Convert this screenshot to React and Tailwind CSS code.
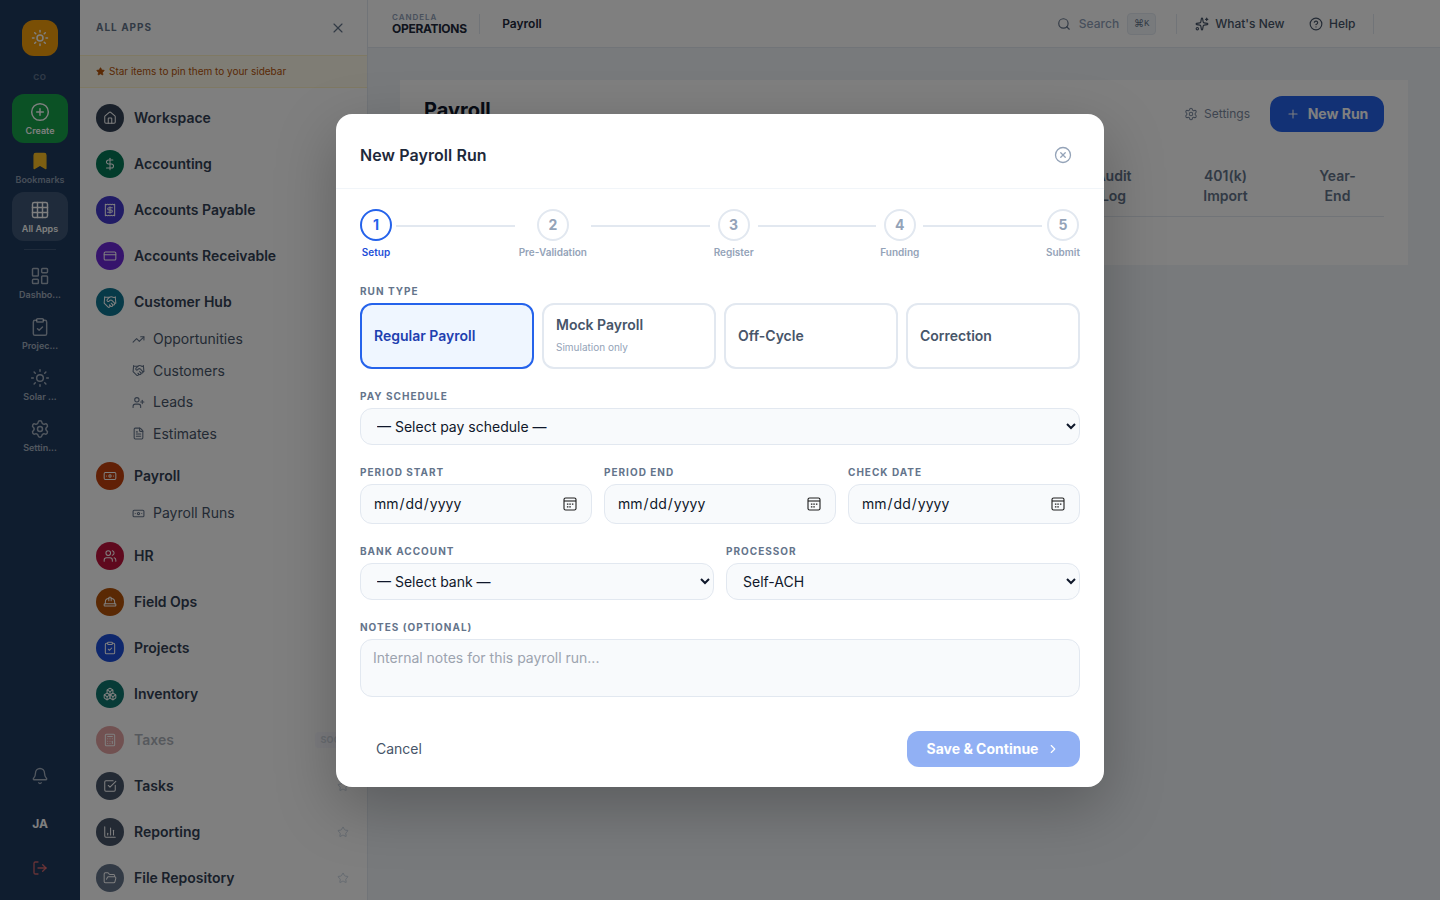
import { Fragment } from 'react';
import {
    Banknote,
    Bell,
    Bookmark,
    Boxes,
    Calculator,
    ChartColumn,
    ChevronRight,
    CircleHelp,
    CirclePlus,
    CircleX,
    ClipboardCheck,
    CreditCard,
    DollarSign,
    FileText,
    FolderOpen,
    Grid3x3,
    Handshake,
    HardHat,
    House,
    LayoutDashboard,
    LogOut,
    Plus,
    Receipt,
    Search,
    Settings,
    Sparkles,
    SquareCheckBig,
    Star,
    Sun,
    TrendingUp,
    UserPlus,
    Users,
    X,
} from 'lucide-react';

const RAIL_ITEMS = [
    { label: 'Dashbo...', icon: LayoutDashboard },
    { label: 'Projec...', icon: ClipboardCheck },
    { label: 'Solar ...', icon: Sun },
    { label: 'Settin...', icon: Settings },
];

const APPS = [
    { label: 'Workspace', icon: House, color: 'bg-[#334155]' },
    { label: 'Accounting', icon: DollarSign, color: 'bg-[#047857]' },
    { label: 'Accounts Payable', icon: Receipt, color: 'bg-[#4338ca]' },
    { label: 'Accounts Receivable', icon: CreditCard, color: 'bg-[#6d28d9]' },
    {
        label: 'Customer Hub',
        icon: Handshake,
        color: 'bg-[#0e7490]',
        childClass: 'mb-[3.5px]',
        children: [
            { label: 'Opportunities', icon: TrendingUp },
            { label: 'Customers', icon: Handshake },
            { label: 'Leads', icon: UserPlus },
            { label: 'Estimates', icon: FileText },
        ],
    },
    {
        label: 'Payroll',
        icon: Banknote,
        color: 'bg-[#c2410c]',
        childClass: 'mb-1',
        children: [{ label: 'Payroll Runs', icon: Banknote }],
    },
    { label: 'HR', icon: Users, color: 'bg-[#be123c]' },
    { label: 'Field Ops', icon: HardHat, color: 'bg-[#b45309]' },
    { label: 'Projects', icon: ClipboardCheck, color: 'bg-[#1d4ed8]' },
    { label: 'Inventory', icon: Boxes, color: 'bg-[#0f766e]' },
    { label: 'Taxes', icon: Calculator, color: 'bg-[#b91c1c]', soon: true },
    { label: 'Tasks', icon: SquareCheckBig, color: 'bg-[#475569]', star: true },
    { label: 'Reporting', icon: ChartColumn, color: 'bg-[#475569]', star: true },
    { label: 'File Repository', icon: FolderOpen, color: 'bg-[#64748b]', star: true },
];

const STEPS = ['Setup', 'Pre-Validation', 'Register', 'Funding', 'Submit'];

const RUN_TYPES = [
    { label: 'Regular Payroll', active: true },
    { label: 'Mock Payroll', hint: 'Simulation only' },
    { label: 'Off-Cycle' },
    { label: 'Correction' },
];

const fieldClass =
    'block w-full rounded-xl border border-slate-200 bg-slate-50 px-3 text-sm text-[#0f172a]';

const railButton = 'flex h-[49px] w-14 flex-col items-center justify-center gap-0.5 rounded-xl pt-0.5';

function Rail() {
    return (
        <nav className="flex w-20 shrink-0 flex-col items-center bg-[#1e3a5f] pt-5 pb-[22px]">
            <div className="flex size-9 items-center justify-center rounded-xl bg-[#f59e0b] text-white">
                <Sun size={18} strokeWidth={2} />
            </div>
            <div className="mt-[14px] h-6 text-[8px] leading-[14px] font-bold tracking-[0.08em] text-white/30">
                CO
            </div>
            <button className={`${railButton} bg-[#16a34a] text-white`}>
                <CirclePlus size={20} strokeWidth={1.75} />
                <span className="text-[9px] leading-[13px] font-semibold">Create</span>
            </button>
            <button className={`${railButton} text-white/50`}>
                <Bookmark size={20} strokeWidth={1.75} className="fill-[#fbbf24] text-[#fbbf24]" />
                <span className="text-[9px] leading-[13px] font-semibold">Bookmarks</span>
            </button>
            <button className={`${railButton} bg-white/15 text-white`}>
                <Grid3x3 size={20} strokeWidth={1.75} />
                <span className="text-[9px] leading-[13px] font-semibold">All Apps</span>
            </button>
            <div className="mt-2 mb-2 h-px w-8 bg-white/15" />
            <div className="flex flex-col gap-0.5">
                {RAIL_ITEMS.map(({ label, icon: Icon }) => (
                    <button key={label} className={`${railButton} text-white/60`}>
                        <Icon size={20} strokeWidth={1.75} />
                        <span className="text-[9px] leading-[13px] font-semibold">{label}</span>
                    </button>
                ))}
            </div>
            <div className="mt-auto flex flex-col items-center">
                <Bell size={18} strokeWidth={1.75} className="text-white/60" />
                <span className="mt-[29px] text-xs leading-5 font-bold text-white">JA</span>
                <LogOut size={16} strokeWidth={2} className="mt-[26px] mb-0.5 text-[#f87171]/80" />
            </div>
        </nav>
    );
}

function AppRow({ app }) {
    const Icon = app.icon;
    return (
        <div className={app.soon ? 'flex h-[46px] items-center opacity-40' : 'flex h-[46px] items-center'}>
            <span className={`flex size-7 items-center justify-center rounded-full text-white ${app.color}`}>
                <Icon size={14} strokeWidth={1.75} />
            </span>
            <span className="ml-2.5 text-sm font-semibold text-[#334155]">{app.label}</span>
            {app.soon && (
                <span className="-mr-0.5 ml-auto rounded bg-indigo-50 px-[5px] text-[9px] leading-4 font-bold tracking-wide text-slate-400">
                    SOON
                </span>
            )}
            {app.star && <Star size={12} strokeWidth={2} className="mr-0.5 ml-auto text-slate-300" />}
        </div>
    );
}

function AppsPanel() {
    return (
        <aside className="flex w-72 shrink-0 flex-col border-r border-slate-200 bg-white">
            <div className="flex h-[55px] shrink-0 items-center justify-between pr-[21.5px] pl-4">
                <span className="text-[10px] font-bold tracking-[0.1em] text-[#64748b]">ALL APPS</span>
                <X size={16} strokeWidth={1.75} className="text-[#64748b]" />
            </div>
            <div className="flex h-[33px] shrink-0 items-center gap-1 border-y border-amber-100 bg-amber-50 px-4 text-[10px] text-[#b45309]">
                <Star size={9} className="fill-[#b45309]" />
                Star items to pin them to your sidebar
            </div>
            <div className="px-4 pt-[7px]">
                {APPS.map((app) => (
                    <Fragment key={app.label}>
                        <AppRow app={app} />
                        {app.children && (
                            <div className={`-mt-[1.5px] ${app.childClass}`}>
                                {app.children.map(({ label, icon: Icon }) => (
                                    <div key={label} className="flex h-[31.5px] items-center pl-9 text-sm text-[#475569]">
                                        <Icon size={13} strokeWidth={2} className="text-[#64748b]" />
                                        <span className="ml-2">{label}</span>
                                        <Star size={12} strokeWidth={1.75} className="mr-0.5 ml-auto text-slate-300" />
                                    </div>
                                ))}
                            </div>
                        )}
                    </Fragment>
                ))}
            </div>
        </aside>
    );
}

function TopBar() {
    return (
        <header className="flex h-12 items-center border-b border-slate-200 bg-white pr-[66px] pl-6 text-xs font-medium text-[#475569]">
            <div>
                <div className="text-[8px] leading-[10px] font-semibold tracking-[0.12em] text-slate-400">CANDELA</div>
                <div className="text-xs leading-[13px] font-bold tracking-[-0.025em] text-[#1e293b]">OPERATIONS</div>
            </div>
            <span className="ml-3 h-5 w-px bg-slate-200" />
            <span className="ml-[22.5px] font-semibold text-[#1e293b]">Payroll</span>
            <Search size={14} className="ml-auto text-[#64748b]" />
            <span className="ml-2 text-slate-400">Search</span>
            <kbd className="ml-2 flex h-[22px] w-[29px] items-center justify-center rounded border border-slate-200 bg-slate-100 font-['Inter',sans-serif] text-[10px] font-normal text-[#64748b]">
                ⌘<span className="font-['Liberation_Mono',monospace] text-[9px]">K</span>
            </kbd>
            <span className="ml-5 h-5 w-px bg-slate-200" />
            <Sparkles size={14} className="ml-[18px]" />
            <span className="ml-1.5">What's New</span>
            <CircleHelp size={14} className="ml-[24.5px]" />
            <span className="ml-1.5">Help</span>
            <span className="ml-[17.5px] h-5 w-px bg-slate-200" />
        </header>
    );
}

function PayrollPage() {
    return (
        <main className="flex-1 p-8">
            <section className="h-[185px] bg-white px-6 pt-4">
                <div className="flex h-9 items-center">
                    <h1 className="mb-2 text-xl font-bold text-[#0f172a]">Payroll</h1>
                    <span className="ml-auto flex items-center gap-1.5 text-xs text-[#7c8ba1]">
                        <Settings size={14} strokeWidth={1.75} />
                        Settings
                    </span>
                    <button className="ml-5 flex h-9 w-[114px] items-center justify-center gap-2 rounded-xl bg-[#2563eb] text-sm font-bold text-white">
                        <Plus size={14} strokeWidth={1.75} />
                        New Run
                    </button>
                </div>
                <div className="mt-6 flex h-[61px] justify-end gap-[19px] border-b border-slate-200 pt-[10px] text-center text-sm font-semibold text-[#64748b]">
                    <span className="w-[93px] px-6">Audit Log</span>
                    <span className="w-[93px] px-5">401(k) Import</span>
                    <span className="w-[93px] px-5">Year-End</span>
                </div>
            </section>
        </main>
    );
}

function Stepper() {
    return (
        <div className="flex items-start">
            {STEPS.map((step, i) => (
                <Fragment key={step}>
                    {i > 0 && <div className="mx-1 mt-4 h-0.5 flex-1 bg-slate-200" />}
                    <div className="flex flex-col items-center gap-1">
                        <span
                            className={
                                i === 0
                                    ? 'flex size-8 items-center justify-center rounded-full border-2 border-[#2563eb] text-sm font-bold text-[#2563eb]'
                                    : 'flex size-8 items-center justify-center rounded-full border-2 border-slate-200 text-sm font-bold text-[#94a3b8]'
                            }
                        >
                            {i + 1}
                        </span>
                        <span
                            className={
                                i === 0
                                    ? 'text-[10px] leading-[15px] font-semibold text-[#1d4ed8]'
                                    : 'text-[10px] leading-[15px] font-semibold text-[#94a3b8]'
                            }
                        >
                            {step}
                        </span>
                    </div>
                </Fragment>
            ))}
        </div>
    );
}

function Field({ label, children }) {
    return (
        <label className="block">
            <span className="mb-1 block text-[10px] leading-[15px] font-bold tracking-[0.1em] text-[#64748b]">
                {label}
            </span>
            {children}
        </label>
    );
}

function DateInput() {
    return (
        <span className="relative block">
            <input
                type="date"
                className={`${fieldClass} h-10 [&::-webkit-calendar-picker-indicator]:opacity-0`}
            />
            <svg
                viewBox="0 0 14 14"
                className="pointer-events-none absolute top-[13px] right-[15px] size-3.5 text-[#1e1e1e]"
                fill="none"
                stroke="currentColor"
                strokeWidth="1.1"
            >
                <rect x="1" y="1" width="12" height="12" rx="1.6" />
                <path d="M1 4h12" />
                <path d="M3.9 7.2h1.5M6.3 7.2h1.5M8.9 7.2h1.5M3.9 9.8h1.5M6.3 9.8h1.5" strokeWidth="1.3" />
            </svg>
        </span>
    );
}

function PayrollRunModal() {
    return (
        <div className="w-3xl rounded-2xl bg-white shadow-[0_20px_60px_rgba(0,0,0,0.25)]">
            <div className="flex h-[75px] items-center justify-between border-b border-slate-100 pr-8 pl-6 pt-2">
                <h2 className="text-base font-semibold tracking-[0.005em] text-[#1e293b]">New Payroll Run</h2>
                <CircleX size={18} strokeWidth={1.75} className="text-[#94a3b8]" />
            </div>
            <div className="px-6 pt-5">
                <Stepper />
                <div className="mt-6 flex flex-col gap-5">
                    <div>
                        <div className="mb-1 text-[10px] leading-[15px] font-bold tracking-[0.1em] text-[#64748b]">
                            RUN TYPE
                        </div>
                        <div className="grid grid-cols-4 gap-2">
                            {RUN_TYPES.map(({ label, hint, active }) => (
                                <button
                                    key={label}
                                    className={
                                        active
                                            ? 'h-[66px] rounded-xl border-2 border-[#2563eb] bg-blue-50 px-3 text-left text-[#1e40af]'
                                            : 'h-[66px] rounded-xl border-2 border-slate-200 px-3 text-left text-[#475569]'
                                    }
                                >
                                    <span className="block text-sm font-semibold">{label}</span>
                                    {hint && (
                                        <span className="mt-1 block pb-px text-[10px] leading-4 text-[#94a3b8]">{hint}</span>
                                    )}
                                </button>
                            ))}
                        </div>
                    </div>
                    <Field label="PAY SCHEDULE">
                        <select className={`${fieldClass} h-[37px]`}>
                            <option>— Select pay schedule —</option>
                        </select>
                    </Field>
                    <div className="grid grid-cols-3 gap-3">
                        {['PERIOD START', 'PERIOD END', 'CHECK DATE'].map((label) => (
                            <Field key={label} label={label}>
                                <DateInput />
                            </Field>
                        ))}
                    </div>
                    <div className="grid grid-cols-2 gap-3">
                        <Field label="BANK ACCOUNT">
                            <select className={`${fieldClass} h-[37px]`}>
                                <option>— Select bank —</option>
                            </select>
                        </Field>
                        <Field label="PROCESSOR">
                            <select className={`${fieldClass} h-[37px]`}>
                                <option>Self-ACH</option>
                            </select>
                        </Field>
                    </div>
                    <Field label="NOTES (OPTIONAL)">
                        <textarea
                            rows={2}
                            placeholder="Internal notes for this payroll run..."
                            className={`${fieldClass} resize-none py-2 placeholder:text-[#9ca3af]`}
                        />
                    </Field>
                </div>
            </div>
            <div className="flex items-center justify-between px-6 pt-[34px] pb-5">
                <button className="px-4 text-sm text-[#475569]">Cancel</button>
                <button className="flex h-9 w-[173px] items-center justify-center gap-2 rounded-xl bg-[#2563eb] text-sm font-bold text-white opacity-50">
                    Save &amp; Continue
                    <ChevronRight size={14} />
                </button>
            </div>
        </div>
    );
}

export default function App() {
    return (
        <div className="relative flex h-screen w-screen overflow-hidden bg-slate-100 font-['Inter',sans-serif]">
            <Rail />
            <AppsPanel />
            <div className="flex flex-1 flex-col">
                <TopBar />
                <PayrollPage />
            </div>
            <div className="absolute inset-0 flex items-center justify-center bg-black/50">
                <PayrollRunModal />
            </div>
        </div>
    );
}
